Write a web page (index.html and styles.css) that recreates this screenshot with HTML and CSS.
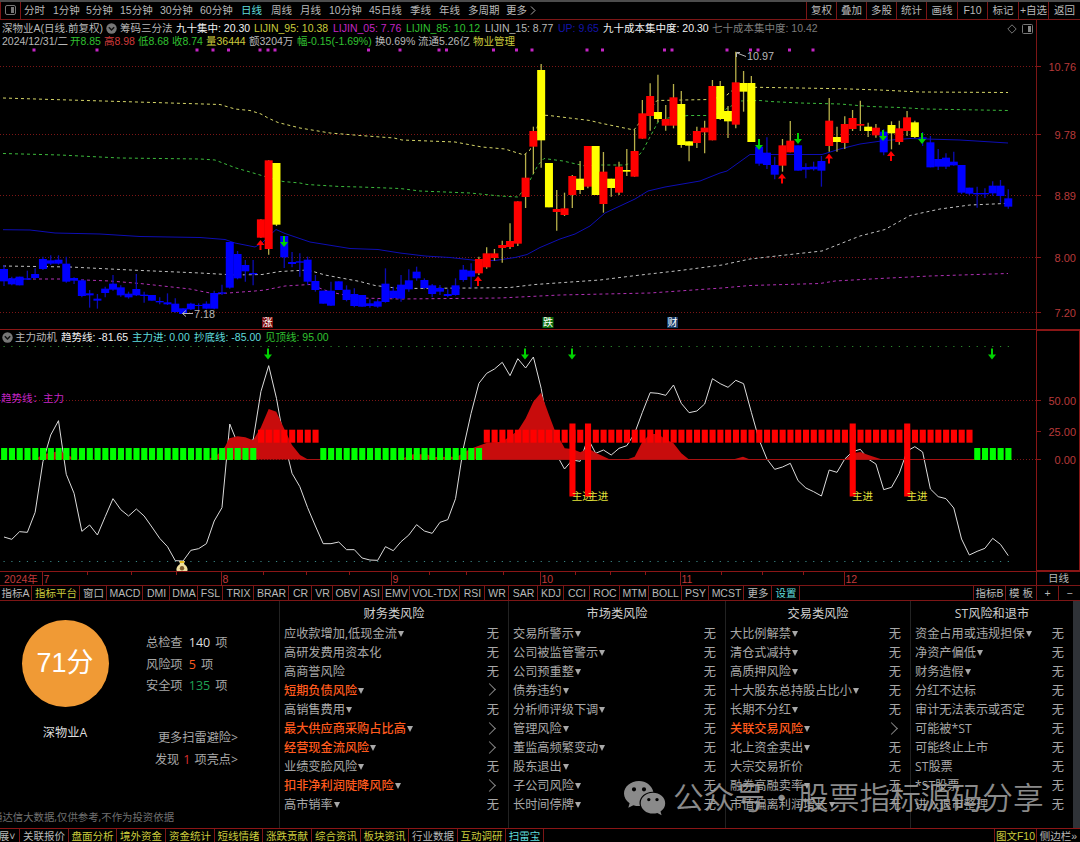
FILE: index.html
```html
<!DOCTYPE html>
<html lang="zh-CN">
<head>
    <meta charset="UTF-8">
    <meta name="viewport" content="width=device-width, initial-scale=1.0">
    <title>深物业A 日线</title>
    <link rel="stylesheet" href="styles.css">
</head>
<body>
<!-- period bar -->
<div class="toolbar">
    <div class="layout-btn">
        <svg width="11" height="10" viewBox="0 0 11 10"><rect x="0.5" y="0.5" width="10" height="9" rx="1.5" fill="none" stroke="#777"/><rect x="6" y="2" width="3" height="6" fill="#777"/></svg>
    </div>
    <ul class="periods">
        <li>分时</li>
        <li>1分钟</li>
        <li>5分钟</li>
        <li>15分钟</li>
        <li>30分钟</li>
        <li>60分钟</li>
        <li class="cyan">日线</li>
        <li>周线</li>
        <li>月线</li>
        <li>10分钟</li>
        <li>45日线</li>
        <li>季线</li>
        <li>年线</li>
        <li>多周期</li>
        <li>更多</li>
        <li><svg width="6" height="9" viewBox="0 0 6 9"><path d="M1 0.5L5 4.5L1 8.5" fill="none" stroke="#aaa"/></svg></li>
    </ul>
    <ul class="tools">
        <li>复权</li>
        <li>叠加</li>
        <li>多股</li>
        <li>统计</li>
        <li>画线</li>
        <li>F10</li>
        <li>标记</li>
        <li>+自选</li>
        <li>返回</li>
    </ul>
</div>

<!-- price pane -->
<div class="pane price">
    <div class="plot">
        <div class="info info-lines">
            <span>深物业A(日线.前复权)</span>
            <svg width="11" height="11" viewBox="0 0 11 11"><circle cx="5.5" cy="5.5" r="5.2" fill="#777"/><path d="M2.8 4.3L5.5 7L8.2 4.3" fill="none" stroke="#111" stroke-width="1.5"/></svg>
            <span>筹码三分法</span>
            <span class="white">九十集中: 20.30</span>
            <span class="yellow">LIJIN_95: 10.38</span>
            <span class="magenta">LIJIN_05: 7.76</span>
            <span class="green">LIJIN_85: 10.12</span>
            <span>LIJIN_15: 8.77</span>
            <span class="blue">UP: 9.65</span>
            <span class="white">九十成本集中度: 20.30</span>
            <span class="dim">七十成本集中度: 10.42</span>
            <svg width="10" height="10" viewBox="0 0 10 10"><path d="M5 0.8L9.2 5L5 9.2L0.8 5Z" fill="none" stroke="#777"/></svg>
            <svg width="11" height="10" viewBox="0 0 11 10"><rect x="0.5" y="0.5" width="10" height="9" rx="1" fill="none" stroke="#777"/><rect x="6" y="2" width="3" height="6" fill="#888"/></svg>
        </div>
        <div class="info info-quote">
            <span>2024/12/31/二</span>
            <span class="green">开8.85</span>
            <span class="red">高8.98</span>
            <span class="green">低8.68</span>
            <span class="green">收8.74</span>
            <span class="yellow">量36444</span>
            <span>额3204万</span>
            <span class="green">幅-0.15(-1.69%)</span>
            <span>换0.69%</span>
            <span>流通5.26亿</span>
            <span class="yellow">物业管理</span>
        </div>
        <svg class="chart" id="price" width="1036" height="282" viewBox="0 47 1036 282"></svg>
    </div>
    <svg class="axis" id="priceAxis" width="43" height="309" viewBox="1037 20 43 309"></svg>
</div>

<!-- indicator pane -->
<div class="pane indicator">
    <div class="plot">
        <div class="info info-ind">
            <svg width="11" height="11" viewBox="0 0 11 11"><circle cx="5.5" cy="5.5" r="5.2" fill="#777"/><path d="M2.8 4.3L5.5 7L8.2 4.3" fill="none" stroke="#111" stroke-width="1.5"/></svg>
            <span>主力动机</span>
            <span class="white">趋势线: -81.65</span>
            <span class="cyan">主力进: 0.00</span>
            <span class="cyan">抄底线: -85.00</span>
            <span class="green">见顶线: 95.00</span>
        </div>
        <svg class="chart" id="trend" width="1036" height="227" viewBox="0 344 1036 227"></svg>
    </div>
    <svg class="axis boxed" id="trendAxis" width="44" height="241" viewBox="1036 330 44 241"></svg>
</div>

<!-- time line -->
<div class="timeline">
    <svg id="months" width="1036" height="14" viewBox="0 571 1036 14"></svg>
    <div class="unit">日线</div>
</div>

<!-- indicator tabs -->
<div class="tabs">
    <ul class="tab-list">
        <li>指标A</li>
        <li class="yellow">指标平台</li>
        <li>窗口</li>
        <li>MACD</li>
        <li>DMI</li>
        <li>DMA</li>
        <li>FSL</li>
        <li>TRIX</li>
        <li>BRAR</li>
        <li>CR</li>
        <li>VR</li>
        <li>OBV</li>
        <li>ASI</li>
        <li>EMV</li>
        <li>VOL-TDX</li>
        <li>RSI</li>
        <li>WR</li>
        <li>SAR</li>
        <li>KDJ</li>
        <li>CCI</li>
        <li>ROC</li>
        <li>MTM</li>
        <li>BOLL</li>
        <li>PSY</li>
        <li>MCST</li>
        <li>更多</li>
        <li class="cyan">设置</li>
    </ul>
    <ul class="tab-right">
        <li>指标B</li>
        <li>模 板</li>
        <li>+</li>
        <li>−</li>
    </ul>
</div>

<!-- risk panel -->
<div class="risk">
    <div class="summary">
        <div class="overview">
            <div class="score-box">
                <div class="score">71分</div>
                <p>深物业A</p>
            </div>
            <div class="stats">
                <p>总检查 <b>140</b> 项</p>
                <p>风险项 <b class="orange">5</b> 项</p>
                <p>安全项 <b class="safe">135</b> 项</p>
                <div class="more">
                    <p>更多扫雷避险&gt;</p>
                    <p>发现<b class="bad">1</b>项亮点&gt;</p>
                </div>
            </div>
        </div>
        <p class="note">通达信大数据,仅供参考,不作为投资依据</p>
    </div>
    <div class="col">
        <h3>财务类风险</h3>
        <ul>
            <li><span class="drop">应收款增加,低现金流</span><i>无</i></li>
            <li><span>高研发费用资本化</span><i>无</i></li>
            <li><span>高商誉风险</span><i>无</i></li>
            <li><span class="drop hot">短期负债风险</span><i class="go"></i></li>
            <li><span class="drop">高销售费用</span><i>无</i></li>
            <li><span class="drop hot">最大供应商采购占比高</span><i class="go"></i></li>
            <li><span class="drop hot">经营现金流风险</span><i class="go"></i></li>
            <li><span class="drop">业绩变脸风险</span><i>无</i></li>
            <li><span class="drop hot">扣非净利润陡降风险</span><i class="go"></i></li>
            <li><span class="drop">高市销率</span><i>无</i></li>
        </ul>
    </div>
    <div class="col">
        <h3>市场类风险</h3>
        <ul>
            <li><span class="drop">交易所警示</span><i>无</i></li>
            <li><span class="drop">公司被监管警示</span><i>无</i></li>
            <li><span class="drop">公司预重整</span><i>无</i></li>
            <li><span class="drop">债券违约</span><i>无</i></li>
            <li><span class="drop">分析师评级下调</span><i>无</i></li>
            <li><span class="drop">管理风险</span><i>无</i></li>
            <li><span class="drop">董监高频繁变动</span><i>无</i></li>
            <li><span class="drop">股东退出</span><i>无</i></li>
            <li><span class="drop">子公司风险</span><i>无</i></li>
            <li><span class="drop">长时间停牌</span><i>无</i></li>
        </ul>
    </div>
    <div class="col">
        <h3>交易类风险</h3>
        <ul>
            <li><span class="drop">大比例解禁</span><i>无</i></li>
            <li><span class="drop">清仓式减持</span><i>无</i></li>
            <li><span class="drop">高质押风险</span><i>无</i></li>
            <li><span class="drop">十大股东总持股占比小</span><i>无</i></li>
            <li><span class="drop">长期不分红</span><i>无</i></li>
            <li><span class="drop hot">关联交易风险</span><i class="go"></i></li>
            <li><span class="drop">北上资金卖出</span><i>无</i></li>
            <li><span>大宗交易折价</span><i>无</i></li>
            <li><span class="drop">融券高融卖率</span><i>无</i></li>
            <li><span class="drop">市值偏离利润增长</span><i>无</i></li>
        </ul>
    </div>
    <div class="col">
        <h3>ST风险和退市</h3>
        <ul>
            <li><span class="drop">资金占用或违规担保</span><i>无</i></li>
            <li><span class="drop">净资产偏低</span><i>无</i></li>
            <li><span class="drop">财务造假</span><i>无</i></li>
            <li><span>分红不达标</span><i>无</i></li>
            <li><span>审计无法表示或否定</span><i>无</i></li>
            <li><span>可能被*ST</span><i>无</i></li>
            <li><span>可能终止上市</span><i>无</i></li>
            <li><span>ST股票</span><i>无</i></li>
            <li><span>*ST股票</span><i>无</i></li>
            <li><span>进入退市整理</span><i>无</i></li>
        </ul>
    </div>
    <div class="scrollbar"></div>

    <!-- watermark over the table -->
    <div class="watermark">
        <svg width="42" height="35" viewBox="0 0 42 35">
            <path fill="#a3a3a3" fill-rule="evenodd" d="M15 0C6.700 0 0 5.600 0 12.600C0 16.500 2.200 20 5.600 22.300L4.300 26.800L9.400 24.200C11.200 24.800 13 25.100 15 25.100L16 25C15.700 24 15.500 23 15.500 22C15.500 15.700 21.500 10.700 28.500 10.700L29.300 10.700C28 4.600 22 0 15 0ZM10 6.200A2.100 2.100 0 1 1 10 10.400A2.100 2.100 0 1 1 10 6.200ZM20 6.200A2.100 2.100 0 1 1 20 10.400A2.100 2.100 0 1 1 20 6.200Z"/>
            <path fill="#a3a3a3" fill-rule="evenodd" d="M29 11.800C22.200 11.800 16.700 16.500 16.700 22.200C16.700 28 22.200 32.600 29 32.600C30.500 32.600 32 32.300 33.300 31.900L37.600 34.200L36.500 30.400C39.500 28.500 41.200 25.500 41.200 22.200C41.200 16.500 35.700 11.800 29 11.800ZM24.800 16.900A1.700 1.700 0 1 1 24.800 20.300A1.700 1.700 0 1 1 24.800 16.900ZM33 16.900A1.700 1.700 0 1 1 33 20.300A1.700 1.700 0 1 1 33 16.900Z"/>
        </svg>
        <span>公众号</span><em>·</em><span>股票指标源码分享</span>
    </div>
</div>

<!-- bottom tabs -->
<div class="bottom">
    <ul class="bottom-list">
        <li class="cut">展˅</li>
        <li>关联报价</li>
        <li class="yellow">盘面分析</li>
        <li class="yellow">境外资金</li>
        <li class="yellow">资金统计</li>
        <li class="yellow">短线情绪</li>
        <li class="yellow">涨跌贡献</li>
        <li class="yellow">综合资讯</li>
        <li class="yellow">板块资讯</li>
        <li>行业数据</li>
        <li class="yellow">互动调研</li>
        <li class="cyan">扫雷宝</li>
    </ul>
    <ul class="bottom-right">
        <li class="yellow">图文F10</li>
        <li>侧边栏»</li>
    </ul>
</div>

<script src="chart.js"></script>
</body>
</html>
```

FILE: styles.css
```css
*{
    box-sizing: border-box;
    margin:0;
    padding:0;
}

body{
    width:1080px;
    height:842px;
    overflow: hidden;
    background:#000;
    color:#b8b8b8;
    font-family: "Liberation Sans", "Noto Sans CJK SC", sans-serif;
    font-size:10.5px;
    line-height: 12px;
}

ul{
    list-style: none;
}

svg{
    display:block;
}

svg text{
    font-family: "Liberation Sans", "Noto Sans CJK SC", sans-serif;
}

/* COLOURS */
.white{ color:#f2f2f2; }
.yellow{ color:#cbcb3c; }
.magenta{ color:#c425c4; }
.green{ color:#30c030; }
.red{ color:#d03a3a; }
.blue{ color:#1414a8; }
.cyan{ color:#5fdcdc; }
.dim{ color:#7d7d7d; }

/* TOOLBAR */
.toolbar{
    display:flex;
    height:20px;
    border-top: 2px solid #4c4c4c;
    border-bottom: 1px solid #7c1616;
    line-height: 17px;
    white-space: nowrap;
}

.layout-btn{
    width:21px;
    padding: 3px 0 0 4px;
    border-left: 1px solid #7c1616;
    border-right: 1px solid #7c1616;
}

.periods{
    display:grid;
    grid-template-columns: 29px 33px 34px 40px 40px 41px 30px 29px 29px 40px 41px 29px 29px 38px 24px 10px;
    padding-left: 3px;
}

.periods svg{
    margin-top: 4px;
}

.tools{
    display:grid;
    grid-template-columns: 30px 30px 30px 30px 31px 30px 31px 30px 32px;
    margin-left: auto;
    text-align: center;
}

.tools li{
    border-left: 1px solid #7c1616;
}

/* CHART PANES */
.pane{
    display:flex;
    border-bottom: 1px solid #8a1616;
}

.price{
    height:310px;
}

.indicator{
    height:242px;
}

.plot{
    width:1036px;
}

.price .axis{
    box-sizing: content-box;
    border-left: 1px solid #7c1616;
}

.info{
    display:grid;
    white-space: nowrap;
    align-items: center;
}

.info-lines{
    grid-template-columns: 104px 14px 56px 78px 79px 73px 79px 73px 45px 109px 295px 15px 11px;
    height:15px;
    padding: 2px 0 0 2px;
}

.info-lines span{
    margin-top: -2px;
}

.info-quote{
    grid-template-columns: 68px 34px 34px 34px 34px 43px 48px 78px 43px 55px 50px;
    height:12px;
    padding: 0 0 2px 2px;
}

.info-ind{
    grid-template-columns: 13px 46px 71px 62px 71px 70px;
    height:14px;
    padding-left: 2px;
}

/* TIME LINE */
.timeline{
    display:flex;
    height:13px;
}

.unit{
    width:44px;
    border-left: 1px solid #8a1616;
    text-align: center;
}

/* INDICATOR TABS */
.tabs{
    display:flex;
    justify-content: space-between;
    height:16px;
    border-top: 1px solid #7c1616;
    border-bottom: 1px solid #7c1616;
    line-height: 14px;
    text-align: center;
    white-space: nowrap;
}

.tab-list{
    display:grid;
    grid-template-columns: 32px 48px 27px 36px 27px 28px 25px 31px 35px 23px 21px 27px 23px 27px 50px 25px 24px 29px 26px 26px 30px 29px 33px 27px 35px 28px 28px;
}

.tab-list li, .bottom-list li{
    border-right: 1px solid #7c1616;
}

.tab-list li + li{
    padding-left: 1px;
}

.tab-right{
    display:grid;
    grid-template-columns: 32px 31px 22px 22px;
}

.tab-right li{
    border-left: 1px solid #7c1616;
}

/* RISK PANEL */
.risk{
    position: relative;
    display:grid;
    grid-template-columns: 279px 229px 217px 185px 163px 7px;
    height:227px;
    font-family: "Open Sans", "Noto Sans CJK SC", sans-serif;
    font-size:12.2px;
    color:#a8a8a8;
    white-space: nowrap;
}

.summary{
    display:flex;
    flex-direction: column;
    justify-content: space-between;
    overflow: hidden;
}

.overview{
    display:flex;
    padding-top: 19px;
}

.score-box{
    width:130px;
    text-align: center;
    color:#ddd;
}

.score{
    width:87px;
    height:87px;
    margin: 0 auto 20px;
    border-radius: 50%;
    background:#f09a35;
    color:#fff;
    font-family: "Liberation Sans", "Noto Sans CJK SC", sans-serif;
    font-size:27px;
    line-height: 87px;
}

.stats{
    padding: 12px 0 0 16px;
    line-height: 21.7px;
}

.stats b{
    margin: 0 2px 0 3px;
    color:#ddd;
    font-weight: normal;
    font-size:12.5px;
}

.stats b.orange{ color:#ff5a1e; }
.stats b.safe{ color:#1fa355; }
.stats b.bad{
    margin: 0 4px;
    color:#d93030;
}

.more{
    width:92px;
    padding-top: 30px;
    line-height: 22px;
}

.more p{
    display:flex;
    justify-content: flex-end;
}

.note{
    margin: 0 0 5px -8px;
    color:#707070;
    font-size:10.4px;
}

.col{
    border-left: 1px solid #222;
    padding: 4px 9px 0 4px;
}

.col h3{
    margin: 0 -5px 1px 0;
    color:#cfcfcf;
    font-size:12.2px;
    font-weight: normal;
    line-height: 18px;
    text-align: center;
}

.col li{
    display:flex;
    justify-content: space-between;
    align-items: center;
    height:19.1px;
}

.col i{
    font-style: normal;
}

.hot{
    color:#ff5a1e;
    font-weight: 500;
}

.drop::after{
    content:"";
    display:inline-block;
    margin: 0 0 1px 1px;
    border-left: 3.5px solid transparent;
    border-right: 3.5px solid transparent;
    border-top: 6px solid #a8a8a8;
}

.col .go{
    width:9px;
    height:9px;
    margin: -2px 5px 0 0;
    border-top: 1px solid #888;
    border-right: 1px solid #888;
    transform: rotate(45deg);
}

.scrollbar{
    background:#2f3237;
}

.watermark{
    position: absolute;
    left:624px;
    top:180px;
    display:flex;
    align-items: center;
    color:#a3a3a3;
    font-family: "Noto Sans CJK SC", sans-serif;
    font-size:30.7px;
    font-weight: 350;
    line-height: 30px;
    opacity:.85;
}

.watermark svg{
    margin-right: 7px;
}

.watermark span, .watermark em{
    margin-top: -5px;
}

.watermark em{
    width:33px;
    font-style: normal;
    text-align: center;
}

/* BOTTOM TABS */
.bottom{
    display:flex;
    justify-content: space-between;
    height:14px;
    border-top: 1px solid #8a1616;
    line-height: 15px;
    text-align: center;
    white-space: nowrap;
}

.bottom-list{
    display:grid;
    grid-template-columns: 20px 49px 48px 49px 49px 48px 49px 49px 48px 49px 48px 38px;
}

.bottom-right{
    display:grid;
    grid-template-columns: 42px 44px;
}

.bottom-right li{
    border-left: 1px solid #7c1616;
}

.cut{
    text-indent: -5px;
    overflow: hidden;
}
```

FILE: chart.js
```js
const NS = 'http://www.w3.org/2000/svg';
const STEP = 7.785;
const colors = { b: '#0000ff', r: '#ff0000', y: '#ffff00' };
const wicks = { b: '#0c0cb4', r: '#b8b04a', y: '#b8b04a' };

function add(parent, tag, attrs, text) {
    const node = document.createElementNS(NS, tag);
    for (const key in attrs) node.setAttribute(key, attrs[key]);
    if (text) node.textContent = text;
    parent.appendChild(node);
    return node;
}

function barX(i) {
    return 4 + STEP * i;
}

const price = document.getElementById('price');
const priceAxis = document.getElementById('priceAxis');
const trend = document.getElementById('trend');
const trendAxis = document.getElementById('trendAxis');
const months = document.getElementById('months');

// dotted grid and the scale on the right
function gridLine(svg, axis, y, label) {
    if (svg) add(svg, 'line', { x1: 0, x2: 1036, y1: y, y2: y, stroke: '#7c1616', 'stroke-dasharray': '1 2' });
    add(axis, 'line', { x1: 1036, x2: 1041, y1: y, y2: y, stroke: '#8a1616' });
    add(axis, 'text', { x: 1076, y: y + 4, 'text-anchor': 'end', 'font-size': 11, fill: '#b83a3a' }, label);
}
gridLine(price, priceAxis, 66.5, '10.76');
gridLine(price, priceAxis, 134.5, '9.78');
gridLine(price, priceAxis, 195.5, '8.89');
gridLine(price, priceAxis, 257.5, '8.00');
gridLine(price, priceAxis, 312.5, '7.20');
add(trendAxis, 'rect', { x: 1036.5, y: 330.5, width: 43, height: 240, fill: 'none', stroke: '#8a1616' });
gridLine(trend, trendAxis, 400.5, '50.00');
gridLine(null, trendAxis, 431.5, '25.00');
gridLine(trend, trendAxis, 459.5, '0.00');

// signal dots
[34, 97, 197, 213, 228.5, 260, 268, 275, 368.5, 400, 439, 446.5, 493.5, 516.5, 532, 587, 602.5, 664.5, 672, 727, 750.5, 758, 789.5, 813].forEach(x => {
    add(price, 'rect', { x: x - 1.5, y: 48.5, width: 3, height: 3, fill: '#c425c4' });
});

// cost lines
function line(svg, points, stroke, dash) {
    const attrs = { points: points, fill: 'none', stroke: stroke };
    if (dash) attrs['stroke-dasharray'] = dash;
    add(svg, 'polyline', attrs);
}
line(price, '3,98 52,99.5 120,101.5 220,104.5 235,109 250,110.5 261,114 268,118 278,122.5 300,128 330,133 360,135.5 394,138 402,140 455,142 482,147 505,149 524,155 530,150 541,115 549,115.5 590,120.5 600,123 634,130 640,122 657,100.5 710,99.5 722,96.5 727,95 735,88 758,87.3 840,88.7 880,90 920,92 1008,92.5', '#d6d668', '3 3');
line(price, '3,153.5 60,155 120,158 200,159 215,160 228,165 236,168 250,172 265,176.5 283,181.5 300,183 307,184.5 340,186.5 360,187 400,188.5 420,191 470,193 500,196 518,197 528,184 538,165 544,158.5 563,161 585,166 600,165 625,165 634,162 643,150 658,122 668,118 688,115.5 710,115.5 722,113 726,109 740,101 760,100.5 770,101.5 800,103 840,104 870,106.5 900,107.5 925,109 1008,110.5', '#3cba3c', '3 3');
line(price, '3,229.7 30,230 55,233 100,234 140,236.5 200,237.5 225,239.5 235,243 255,247 262,243 270,235 276,229.5 285,233.5 310,242 350,248.5 378,249.5 400,253 425,256 450,257.5 475,260.3 495,260.5 515,257.5 527,254.5 540,247.5 560,239 575,234 590,226 605,213 620,206 635,199 648,191 665,187 700,181 720,173 727,171 750,154.5 798,154.5 822,154.5 840,149 860,144 885,140.5 910,138.5 960,140 1008,143', '#0e0eb4');
line(price, '3,266 70,267 90,268 130,270 200,273 235,275 262,274.5 280,271.5 308,270 325,275 360,281.5 375,285.5 400,288.5 470,288 510,287.5 535,284.5 600,280 632,276 680,270.5 722,265 750,259 790,254.5 822,251 860,236 885,229.5 910,215.5 940,209 970,205 1005,203.5', '#c0c0c0', '3 3');
line(price, '3,279 60,279 110,281 140,283.5 190,289 215,294 255,291 265,290 285,286 310,284.5 330,292 360,298 400,299 500,298 520,297 560,295 650,293 722,288 750,285.5 820,283.5 835,281 880,278.5 930,276 1008,273.5', '#b030b4', '3 3');

// candles: colour, body top, body bottom, wick top, wick bottom (three units per pixel below base)
function candles(start, base, rows) {
    rows.split(' ').forEach((row, n) => {
        const [c, top, bottom, high, low] = row.split(',');
        const x = barX(start + n);
        const y = v => base + v / 3;
        add(price, 'line', { x1: x, x2: x, y1: y(high || top), y2: y(low || bottom), stroke: wicks[c], 'stroke-width': 1.3 });
        add(price, 'rect', { x: x - 4, y: y(top), width: 8, height: (bottom - top) / 3, fill: colors[c] });
    });
}
candles(0, 60, 'b,627,664,615,678 b,655,673,650,676 b,650,676 b,655,659,632,660 b,642,654,625,658 b,597,627,590,630 b,601,611,586,615 b,599,611,586,614 b,611,665,590,668 b,654,662,652,672 b,661,708,658,712 b,700,706,690,743 b,716,722,702,746 b,686,699,680,712 b,671,689,645,692 b,682,706,676,710 b,701,712,695,716 b,687,706,642,708 b,704,708,695,728 b,705,722 b,723,727,712,733 b,727,733,700,735 b,731,756,715,758 b,745,762 b,731,748,728,750 b,735,738,730,752 b,731,746,724,748 b,699,746,692,748 b,697,701,674,705 b,546,683,546,686 b,582,655,573,658 b,615,634,600,665 b,639,643,600,676 r,478,533 r,301,567,301,584 y,309,494,309,498 b,528,592,528,624 b,606,612,576,622 b,604,608,580,650 b,599,665,590,675 b,663,690,645,695 b,692,731 b,692,737,665,738 b,664,690 b,689,720,676,724 b,702,738,685,742');
candles(46, 60, 'b,705,740 b,730,738,718,743 b,724,740,718,743 b,671,726,625,728 b,692,714,680,716 b,674,716,645,725 b,661,688,628,695 b,635,655,620,662 b,660,684,655,688 b,676,702,672,712 b,684,695,675,705 b,702,708,688,712 b,676,705,655,707 b,629,660,615,665 b,632,650,610,683 r,597,640,590,645 r,580,622,562,626 r,580,594,567,602 r,555,564,542,608 r,543,561,490,567 r,424,551,424,558 r,353,411,280,444 r,213,260,200,342 y,30,241,12,323 y,309,442 r,447,456,390,512 r,445,465,398,468 r,348,405,345,444 y,356,390,303,402 r,258,380,258,385 y,258,405 r,335,432,276,458 y,356,384,356,410 r,320,398,305,405 y,330,335,267,348 r,273,350,210,350 r,160,236,120,236 r,108,168,70,212 y,156,177,44,186 r,177,197,135,212 r,112,197,72,205 y,132,255,93,263 y,244,257,244,304 r,213,249,200,264 r,203,217,182,280 r,78,241,60,241');
candles(92, 50, 'y,108,207,93,210 y,183,214,168,264 r,97,224,5,235 y,99,125,63,185 y,99,276,78,276 b,290,341,290,347 b,308,345,262,357 b,345,374,320,388 r,286,347,267,365 r,272,307,213,307 b,286,362 b,351,359,340,385 b,350,358,335,362 b,333,362,318,410 r,212,288,144,305 y,261,276,230,305 r,222,279,199,297 r,204,237,180,243 r,222,227,152,243 y,230,243,218,261 r,233,256,222,263 b,245,307,238,316 y,225,250,214,298 r,235,276,212,284 r,202,243,183,258 y,217,261,212,264 b,262,266,246,288 b,277,352,258,352 b,327,350,297,360 b,323,350,310,357 b,335,346,305,347 b,345,428,345,432 b,413,431,413,436 b,429,433,410,473 b,429,433,415,444 b,407,430,394,437 b,407,438,390,458 b,445,470,418,476');

// buy / sell arrows
function arrowUp(svg, x, y) {
    add(svg, 'path', { d: `M${x} ${y}l4 5h-3v5h-2v-5h-3z`, fill: '#ff0000' });
}
function arrowDown(svg, x, y) {
    add(svg, 'path', { d: `M${x} ${y}l4 -5h-3v-6h-2v6h-3z`, fill: '#00d200' });
}
[[260.5, 240], [478, 276], [782, 173.5], [829, 153.5], [891, 151]].forEach(p => arrowUp(price, p[0], p[1]));
[[284, 247], [759, 150], [798, 144], [883, 141], [922, 144]].forEach(p => arrowDown(price, p[0], p[1]));
[268, 525, 572, 992].forEach(x => arrowDown(trend, x, 359.5));

// high and low marks
add(price, 'path', { d: 'M736.5 57V52.5H740M737 53L746 56.5', fill: 'none', stroke: '#b8b8b8' });
add(price, 'text', { x: 747, y: 60, 'font-size': 10.8, fill: '#b8b8b8' }, '10.97');
add(price, 'path', { d: 'M193 313.5H182.5M186 310.5L182.5 313.5L186 316.5', fill: 'none', stroke: '#b8b8b8' });
add(price, 'text', { x: 194, y: 318, 'font-size': 10.8, fill: '#b8b8b8' }, '7.18');

[[262, '涨', '#7c0c0c'], [542.5, '跌', '#0d6e0d'], [667, '财', '#123a68']].forEach(tag => {
    add(price, 'rect', { x: tag[0], y: 317, width: 11, height: 11, fill: tag[2] });
    add(price, 'text', { x: tag[0] + 0.5, y: 326.3, 'font-size': 10, fill: '#fff' }, tag[1]);
});

// limits of the indicator
line(trend, '3.5,346.5 1010,346.5', '#2c8c2c', '1.2 6.585');
line(trend, '3.5,561.5 1010,561.5', '#3a8484', '1.2 6.585');
add(trend, 'text', { x: 1, y: 401.5, 'font-size': 10.5, fill: '#c425c4' }, '趋势线：主力');

const values = [636, 643, 620, 622, 562, 410, 330, 287, 448, 505, 619, 600, 630, 575, 521, 554, 573, 552, 573, 606, 640, 665, 707, 708, 676, 671, 656, 588, 548, 297, 355, 350, 345, 200, 122, 220, 350, 445, 485, 548, 603, 656, 656, 651, 674, 674, 699, 705, 706, 665, 677, 650, 630, 599, 618, 625, 592, 584, 521, 370, 265, 175, 145, 132, 112, 152, 101, 129, 96, 190, 320, 390, 432, 405, 409, 340, 385, 375, 390, 370, 362, 325, 262, 203, 205, 211, 180, 235, 263, 258, 237, 161, 176, 187, 166, 176, 262, 345, 402, 433, 426, 415, 467, 489, 500, 513, 435, 442, 402, 380, 373, 402, 417, 494, 487, 445, 378, 365, 381, 492, 515, 521, 549, 642, 690, 679, 670, 640, 658, 692];
line(trend, values.map((v, i) => barX(i) + ',' + (325 + v / 3)).join(' '), '#dcdcdc');

// main force areas
[
    '35,459.5 43,454.3 60,451 67,455 78,459.5',
    '208,459.5 218,454.3 225,446.7 229.3,438.3 237.5,436.3 245.3,437.3 253,440.3 260.7,427.7 268.7,409 276.3,411.7 284,428.3 292,445 300,455 308,459.5',
    '400,459.5 413,454.3 427,454.3 433,457 457,456.7 470,449 487,442.7 502,441.7 517.7,431 525.7,418.3 533.3,401.7 541,392.7 549,415 554.7,430 564.7,448.3 572.3,449 580.3,452.3 588,448.3 596.7,453.3 610,459.5',
    '627,459.5 634.7,456.7 642.3,441.7 650,434 658,434 665.7,439.5 673.3,443 681.3,453.3 689,459.5',
    '733,459.5 743,456.7 750,459.5',
    '845,459.5 852.7,453.3 860.3,452 868.3,455 882,459.5'
].forEach(points => add(trend, 'polygon', { points: points, fill: '#c80c0c' }));
line(trend, '300,459.5 320,459.5', '#a81010');
line(trend, '480,459.5 974,459.5', '#a81010');

function blocks(from, to, fill, top, height) {
    for (let i = from; i <= to; i++) {
        add(trend, 'rect', { x: barX(i) - 2.9, y: top, width: 6.1, height: height, fill: fill });
    }
}
blocks(0, 32, '#00ff00', 448, 12);
blocks(33, 40, '#ff0000', 429.7, 13);
blocks(41, 61, '#00ff00', 448, 12);
blocks(62, 124, '#ff0000', 429.7, 13);
blocks(125, 129, '#00ff00', 448, 12);

// main force entry bars
[73, 75, 109, 116].forEach(i => {
    blocks(i, i, '#ff0000', 423.5, 73);
    add(trend, 'text', { x: barX(i) - 0.5, y: 500, 'font-size': 10.5, fill: '#e4e43c' }, '主进');
});

// money bag
add(trend, 'path', { d: 'M179 561H185L184 564C187 566 188.5 569 187 571.5H177C175.5 569 177 566 180 564Z', fill: '#f1e0a0' });
add(trend, 'rect', { x: 180, y: 561, width: 4, height: 2, fill: '#e8c020' });
add(trend, 'circle', { cx: 182, cy: 568.3, r: 2.2, fill: '#7c5a2c' });

// months
[[42.5, '7'], [221.5, '8'], [391.5, '9'], [540.5, '10'], [680.5, '11'], [844.5, '12']].forEach(m => {
    add(months, 'line', { x1: m[0], x2: m[0], y1: 571, y2: 585, stroke: '#8a1616' });
    add(months, 'text', { x: m[0] + 1, y: 582, 'font-size': 10.5, fill: '#c23a3a' }, m[1]);
});
[87.5, 131.5, 176.5, 263.5, 306.5, 349.5, 429.5, 466.5, 503.5, 575.5, 610.5, 645.5, 721.5, 762.5, 803.5].forEach(x => {
    add(months, 'line', { x1: x, x2: x, y1: 571, y2: 574, stroke: '#8a1616' });
});
add(months, 'text', { x: 4, y: 582, 'font-size': 10.5, fill: '#c23a3a' }, '2024年');
```
